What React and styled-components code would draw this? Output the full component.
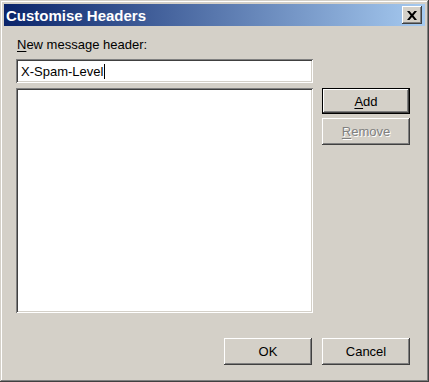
import React from 'react';
import styled, { createGlobalStyle } from 'styled-components';

const Global = createGlobalStyle`
  html, body {
    margin: 0;
    padding: 0;
    background: #d4d0c8;
  }
  * {
    box-sizing: border-box;
  }
`;

const raised = `
  box-shadow: inset -1px -1px #404040, inset 1px 1px #ffffff,
    inset -2px -2px #808080, inset 2px 2px #d4d0c8;
`;

const sunken = `
  box-shadow: inset 1px 1px #808080, inset -1px -1px #ffffff,
    inset 2px 2px #404040, inset -2px -2px #d4d0c8;
`;

const Window = styled.div`
  width: 429px;
  height: 382px;
  padding: 4px;
  background: #d4d0c8;
  font-family: 'Liberation Sans', Arial, sans-serif;
  font-size: 13px;
  color: #000;
  display: flex;
  flex-direction: column;
  box-shadow: inset -1px -1px #404040, inset 1px 1px #d4d0c8,
    inset -2px -2px #808080, inset 2px 2px #ffffff;
`;

const TitleBar = styled.div`
  height: 22px;
  display: flex;
  align-items: center;
  justify-content: space-between;
  padding: 0 3px 0 2px;
  background: linear-gradient(to right, #0a246a, #a6caf0);
  color: #fff;
  font-weight: bold;
  font-size: 15px;
`;

const CloseButton = styled.div`
  width: 20px;
  height: 18px;
  background: #d4d0c8;
  display: flex;
  align-items: center;
  justify-content: center;
  padding-top: 1px;
  ${raised}
`;

const Body = styled.div`
  flex: 1;
  display: flex;
  flex-direction: column;
  padding: 11px 15px 13px 12px;
`;

const Form = styled.div`
  display: grid;
  grid-template-columns: 297px 88px;
  grid-template-rows: auto auto 225px;
  column-gap: 9px;
`;

const Label = styled.label`
  grid-column: 1;
  padding-left: 1px;
  line-height: 15px;
  margin-bottom: 7px;
`;

const TextBox = styled.div`
  grid-column: 1;
  height: 24px;
  background: #fff;
  padding: 0 5px;
  display: flex;
  align-items: center;
  margin-bottom: 5px;
  ${sunken}
`;

const Caret = styled.span`
  display: inline-block;
  width: 1px;
  height: 15px;
  background: #000;
  margin-left: 1px;
`;

const List = styled.div`
  grid-column: 1;
  background: #fff;
  ${sunken}
`;

const SideButtons = styled.div`
  grid-column: 2;
  grid-row: 3;
  display: flex;
  flex-direction: column;
  gap: 4px;
`;

const Button = styled.div`
  width: 88px;
  height: ${(p) => p.$h || 26}px;
  display: flex;
  align-items: center;
  justify-content: center;
  background: #d4d0c8;
  color: ${(p) => (p.$disabled ? '#808080' : '#000')};
  text-shadow: ${(p) => (p.$disabled ? '1px 1px #ffffff' : 'none')};
  ${(p) =>
    p.$default
      ? `box-shadow: inset 0 0 0 1px #000, inset -2px -2px #404040, inset 2px 2px #ffffff,
    inset -3px -3px #808080;`
      : raised}
`;

const Key = styled.span`
  text-decoration: underline;
  text-underline-offset: 2px;
`;

const Footer = styled.div`
  margin-top: auto;
  display: flex;
  justify-content: flex-end;
  gap: 10px;
`;

const CloseIcon = () => (
  <svg width="10" height="9" viewBox="0 0 10 9">
    <path d="M0 0h2.5l2.5 3 2.5-3H10L6.4 4.5 10 9H7.5L5 6 2.5 9H0l3.6-4.5z" fill="#000" />
  </svg>
);

export default function App() {
  return (
    <>
      <Global />
      <Window>
        <TitleBar>
          <span>Customise Headers</span>
          <CloseButton>
            <CloseIcon />
          </CloseButton>
        </TitleBar>
        <Body>
          <Form>
            <Label>
              <Key>N</Key>ew message header:
            </Label>
            <TextBox>
              X-Spam-Level
              <Caret />
            </TextBox>
            <List />
            <SideButtons>
              <Button $default>
                <Key>A</Key>dd
              </Button>
              <Button $disabled $h={27}>
                <Key>R</Key>emove
              </Button>
            </SideButtons>
          </Form>
          <Footer>
            <Button $h={27}>OK</Button>
            <Button $h={27}>Cancel</Button>
          </Footer>
        </Body>
      </Window>
    </>
  );
}
